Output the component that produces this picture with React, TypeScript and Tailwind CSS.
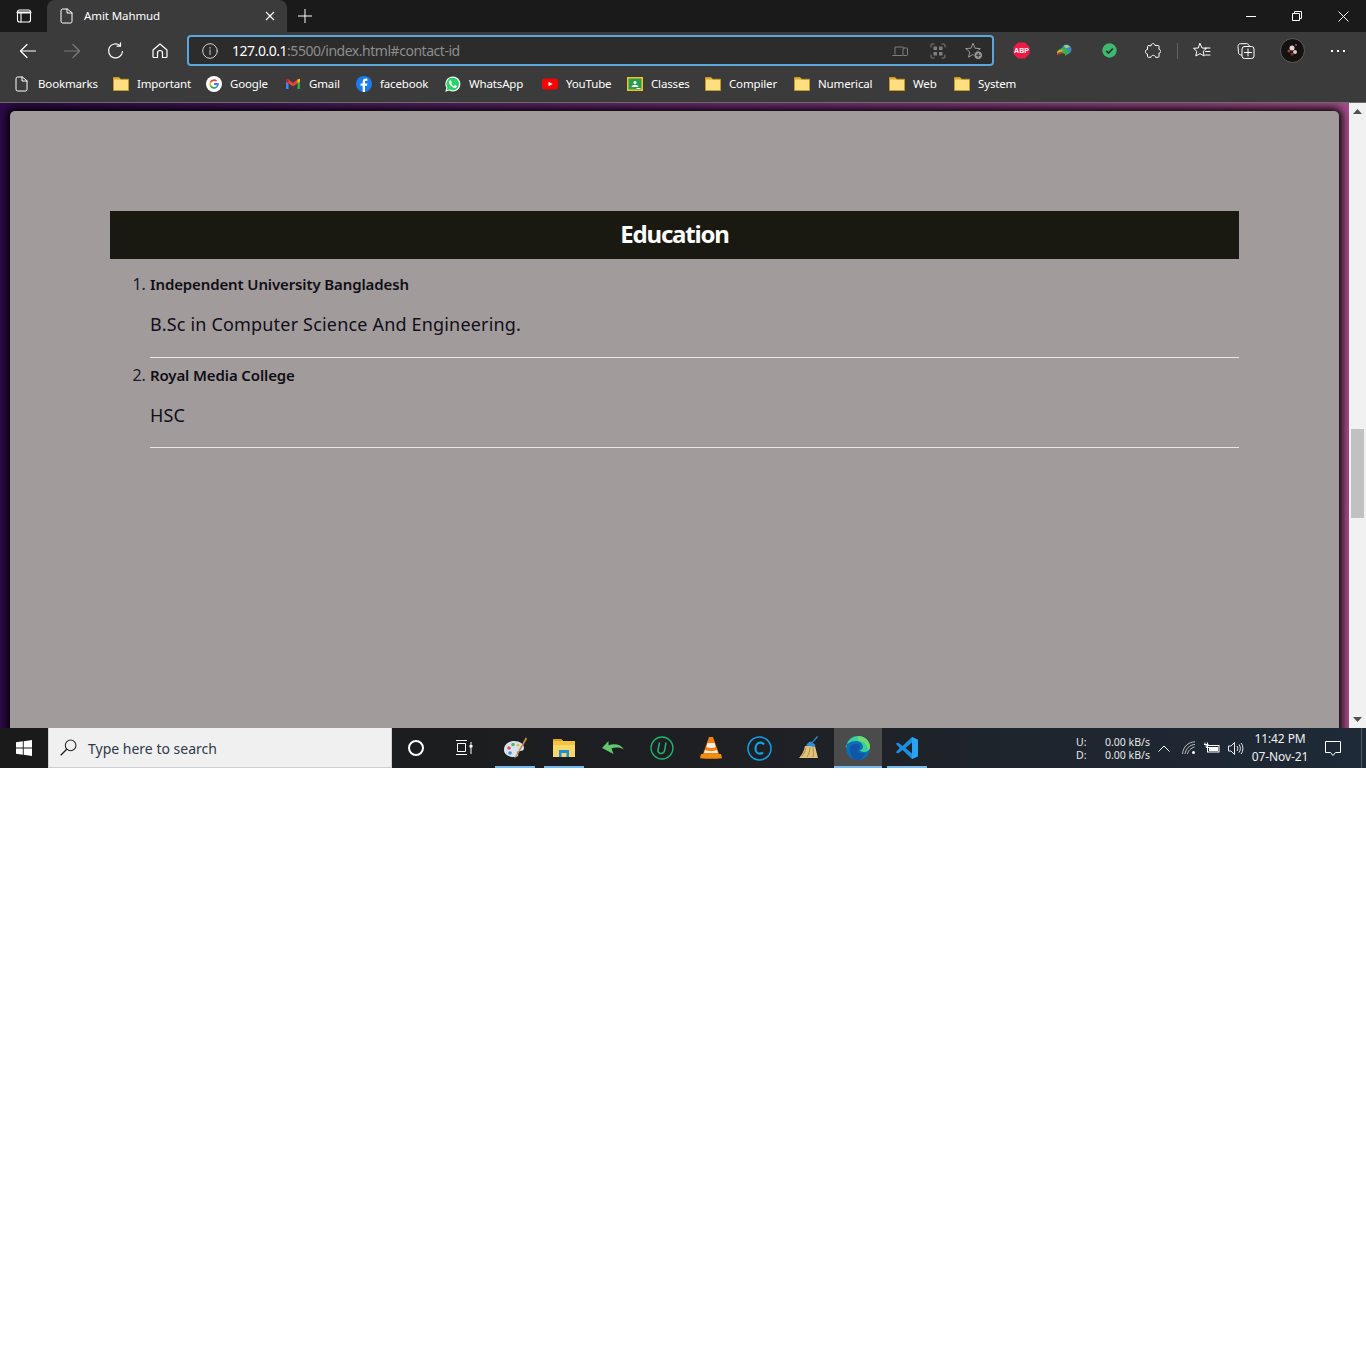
import React from "react";

const ui = "font-['Noto_Sans','Open_Sans',sans-serif]";
const page = "font-['Noto_Sans','Open_Sans',sans-serif]";

function Stroke({ size = 20, sw = 1.2, color = "currentColor", children, vb = 20 }: { size?: number; sw?: number; color?: string; children: React.ReactNode; vb?: number }) {
  return (
    <svg width={size} height={size} viewBox={`0 0 ${vb} ${vb}`} fill="none" stroke={color} strokeWidth={sw} strokeLinecap="round" strokeLinejoin="round">
      {children}
    </svg>
  );
}

const Doc = ({ size = 16 }: { size?: number }) => (
  <Stroke size={size} vb={16} sw={1}>
    <path d="M2 2.500a1.500 1.500 0 0 1 1.500-1.500h4.800L13 4.700v8.800a1.500 1.500 0 0 1-1.500 1.500h-8A1.500 1.500 0 0 1 2 13.500z" />
    <path d="M8 1v4h5" />
  </Stroke>
);

const Folder = () => (
  <svg width="16" height="16" viewBox="0 0 16 16">
    <path d="M.5 1.500h5.500l1.500 1.800h8v11.200H.5z" fill="#ffdf80" stroke="#c39a2a" />
    <path d="M1 1.800h5l1.300 1.700H1z" fill="#d9a92d" />
  </svg>
);

const Google = () => (
  <svg width="16" height="16" viewBox="0 0 16 16">
    <circle cx="8" cy="8" r="8" fill="#fff" />
    <path d="M8 3.200a4.800 4.800 0 0 1 3.200 1.200L10 5.600A3.100 3.100 0 0 0 5.100 7L3.700 5.900A4.800 4.800 0 0 1 8 3.200z" fill="#ea4335" />
    <path d="M3.700 5.900 5.100 7a3 3 0 0 0 0 2l-1.400 1.100a4.800 4.800 0 0 1 0-4.200z" fill="#fbbc05" />
    <path d="M3.700 10.100 5.100 9A3.100 3.100 0 0 0 10 10.400l1.300 1.100A4.800 4.800 0 0 1 3.700 10.100z" fill="#34a853" />
    <path d="M12.800 7.100H8v1.800h2.800c-.2.600-.5 1.100-.8 1.500l1.300 1.100c1-.9 1.600-2.400 1.500-4.400z" fill="#4285f4" />
  </svg>
);

const Gmail = () => (
  <svg width="16" height="16" viewBox="0 0 16 16">
    <path d="M1 4v9h2.500V7z" fill="#4285f4" />
    <path d="M15 4v9h-2.500V7z" fill="#34a853" />
    <path d="M1 4l1.500-1.200L8 7l5.500-4.200L15 4v1.500L8 10.500 1 5.500z" fill="#ea4335" />
    <path d="M12.500 3.600 15 2.800V5.500l-2.500 1.700z" fill="#fbbc05" />
    <path d="M1 2.800 3.500 3.600v3.600L1 5.500z" fill="#c5221f" />
  </svg>
);

const Facebook = () => (
  <svg width="16" height="16" viewBox="0 0 16 16">
    <circle cx="8" cy="8" r="8" fill="#1b7cf2" />
    <path d="M9 16V9.800h2l.4-2.400H9V6c0-.8.300-1.200 1.200-1.200h1.200V2.700c-.5-.1-1.100-.2-1.700-.2C8 2.500 6.700 3.700 6.700 5.800v1.600H4.600v2.400h2.100V16z" fill="#fff" />
  </svg>
);

const WhatsApp = () => (
  <svg width="16" height="16" viewBox="0 0 16 16">
    <path d="M.3 15.700l1.100-3.900A7.500 7.500 0 1 1 4.300 14.600z" fill="#fff" />
    <path d="M1.700 14.300l.8-2.700A6.300 6.300 0 1 1 4.600 13.500z" fill="#25d366" />
    <path d="M5.600 4.300c-.3 0-.7.100-1 .5-.7.700-.8 1.800-.2 3 .9 1.800 2.500 3.300 4.500 4 1.100.4 2 .1 2.600-.5.300-.3.400-.8.400-1.200l-2-1-.8 1c-1.200-.4-2.300-1.400-2.900-2.600l.7-.9z" fill="#fff" />
  </svg>
);

const YouTube = () => (
  <svg width="16" height="16" viewBox="0 0 16 16">
    <rect x="0" y="2.500" width="16" height="11" rx="3" fill="#f00" />
    <path d="M6.500 5.700 10.700 8l-4.200 2.300z" fill="#fff" />
  </svg>
);

const Classroom = () => (
  <svg width="16" height="16" viewBox="0 0 16 16">
    <rect x="0" y="1" width="16" height="14" fill="#f7c325" />
    <rect x="1.500" y="2.500" width="13" height="11" fill="#2a9c4f" />
    <circle cx="8" cy="6.500" r="1.600" fill="#fff" />
    <path d="M4.500 11c.4-1.600 1.800-2.300 3.500-2.300s3.100.7 3.500 2.300z" fill="#fff" />
    <rect x="9.500" y="12" width="4" height="1" fill="#fff" />
  </svg>
);

const marks: { label: string; icon: React.ReactNode; w: string }[] = [
  { label: "Bookmarks", icon: <Doc />, w: "w-[59px]" },
  { label: "Important", icon: <Folder />, w: "w-[53px]" },
  { label: "Google", icon: <Google />, w: "w-[39px]" },
  { label: "Gmail", icon: <Gmail />, w: "w-[31px]" },
  { label: "facebook", icon: <Facebook />, w: "w-[49px]" },
  { label: "WhatsApp", icon: <WhatsApp />, w: "w-[57px]" },
  { label: "YouTube", icon: <YouTube />, w: "w-[45px]" },
  { label: "Classes", icon: <Classroom />, w: "w-[38px]" },
  { label: "Compiler", icon: <Folder />, w: "w-[49px]" },
  { label: "Numerical", icon: <Folder />, w: "w-[55px]" },
  { label: "Web", icon: <Folder />, w: "w-[25px]" },
  { label: "System", icon: <Folder />, w: "w-[37px]" },
];

function Slot({ children, cls = "w-[44px]" }: { children: React.ReactNode; cls?: string }) {
  return <div className={`${cls} h-full flex items-center justify-center shrink-0`}>{children}</div>;
}

function TitleBar() {
  return (
    <div className="h-[32px] bg-[#1a1a1a] flex text-white shrink-0">
      <div className="w-[47px] flex items-center justify-center">
        <Stroke size={16} vb={16} sw={1.1}>
          <rect x="1.500" y="2" width="13" height="12" rx="2" />
          <path d="M1.500 4.500h13" strokeWidth="2" />
          <path d="M5 5v9" />
        </Stroke>
      </div>
      <div className={`w-[240px] bg-[#3b3b3b] rounded-t-[8px] flex items-center pl-[12px] pr-[12px] ${ui}`}>
        <Doc />
        <span className="ml-[9px] text-[11.5px] tracking-[-0.1px] flex-1 whitespace-nowrap">Amit Mahmud</span>
        <svg width="10" height="10" viewBox="0 0 10 10" stroke="#fff" strokeWidth="1.200"><path d="M1 1l8 8M9 1l-8 8" /></svg>
      </div>
      <div className="w-[36px] flex items-center justify-center">
        <svg width="16" height="16" viewBox="0 0 16 16" stroke="#fff" strokeWidth="1"><path d="M8 1v14M1 8h14" /></svg>
      </div>
      <div className="flex-1" />
      <Slot cls="w-[46px]"><svg width="10" height="10" viewBox="0 0 10 10" stroke="#fff"><path d="M0 5.500h10" /></svg></Slot>
      <Slot cls="w-[46px]"><svg width="10" height="10" viewBox="0 0 10 10" stroke="#fff" fill="none"><path d="M.5 2.500h7v7h-7zM2.500 2.500v-2h7v7h-2" /></svg></Slot>
      <Slot cls="w-[46px]"><svg width="11" height="11" viewBox="0 0 11 11" stroke="#fff"><path d="M.5.500l10 10M10.500.500l-10 10" /></svg></Slot>
    </div>
  );
}

function Toolbar() {
  return (
    <div className="h-[37px] bg-[#3b3b3b] flex items-center pl-[6px] text-white shrink-0">
      <Slot>
        <Stroke size={18} vb={18} sw={1.200}><path d="M1.500 9h15M8 2.500 1.500 9 8 15.500" /></Stroke>
      </Slot>
      <Slot>
        <Stroke size={18} vb={18} sw={1.200} color="#7b7b7b"><path d="M16.500 9h-15M10 2.500 16.500 9 10 15.500" /></Stroke>
      </Slot>
      <Slot>
        <Stroke size={18} vb={18} sw={1.200}><path d="M15.500 9.500A7 7 0 1 1 13 3.500" /><path d="M13.500 .8v3.400H10" /></Stroke>
      </Slot>
      <Slot>
        <Stroke size={18} vb={18} sw={1.200}><path d="M2 8 9 2l7 6v6.500a1 1 0 0 1-1 1h-3.500V11a2.500 2.500 0 0 0-5 0v4.500H3a1 1 0 0 1-1-1z" /></Stroke>
      </Slot>
      <div className={`ml-[5px] w-[807px] h-[31px] rounded-[4px] border-2 border-[#5aa7dc] bg-[#2c2c2c] flex items-center ${ui}`}>
        <div className="w-[43px] pr-[2px] flex justify-center text-[#d0d0d0]">
          <Stroke size={16} vb={16} sw={1}>
            <circle cx="8" cy="8" r="7.300" />
            <path d="M8 7v4.500M8 4.300v1" />
          </Stroke>
        </div>
        <span className="text-[14px] tracking-[-0.47px] text-[#8c8c8c] whitespace-nowrap">
          <span className="text-white">127.0.0.1</span>:5500/index.html#contact-id
        </span>
        <div className="flex-1" />
        <div className="w-[36px] pr-[4px] flex justify-center text-[#7f7f7f]">
          <Stroke size={16} vb={16} sw={1}>
            <path d="M3 11V4h8M.8 12.500h9.500" />
            <rect x="11" y="5" width="4.500" height="7.500" rx=".8" />
          </Stroke>
        </div>
        <div className="w-[36px] pr-[1px] flex justify-center text-[#7f7f7f]">
          <Stroke size={16} vb={16} sw={1}>
            <path d="M1 4V2a1 1 0 0 1 1-1h2M12 1h2a1 1 0 0 1 1 1v2M15 12v2a1 1 0 0 1-1 1h-2M4 15H2a1 1 0 0 1-1-1v-2" />
            <rect x="3.500" y="3.500" width="3.500" height="3.500" fill="#7f7f7f" stroke="none" />
            <rect x="9" y="3.500" width="3.500" height="3.500" fill="#7f7f7f" stroke="none" />
            <rect x="3.500" y="9" width="3.500" height="3.500" fill="#7f7f7f" stroke="none" />
            <rect x="9" y="9" width="3.500" height="3.500" fill="#7f7f7f" stroke="none" />
          </Stroke>
        </div>
        <div className="w-[36px] flex justify-center text-[#9a9a9a]">
          <svg width="18" height="18" viewBox="0 0 18 18" fill="none" stroke="currentColor" strokeLinejoin="round">
            <path d="M8 1.200 10 6.200l5.300.4-4.100 3.400 1.300 5.200L8 12.500l-4.500 2.700L4.800 10 .7 6.600 6 6.200z" />
            <circle cx="13.200" cy="13.200" r="4.300" fill="#9a9a9a" stroke="#2c2c2c" />
            <path d="M13.200 11v4.400M11 13.200h4.400" stroke="#2c2c2c" />
          </svg>
        </div>
      </div>
      <div className="ml-[5px] flex h-full items-center">
        <Slot>
          <svg width="17" height="17" viewBox="0 0 17 17">
            <path d="M5 .5h7L16.500 5v7L12 16.500H5L.5 12V5z" fill="#ed1c47" />
            <text x="8.500" y="11" textAnchor="middle" fontSize="7" fontWeight="700" fill="#fff" fontFamily="Liberation Sans">ABP</text>
          </svg>
        </Slot>
        <Slot>
          <svg width="18" height="18" viewBox="0 0 18 18">
            <circle cx="10.500" cy="7.500" r="5" fill="#3f7fd6" />
            <path d="M8 3.500a5 5 0 0 1 6 1.500l-5 1.500z" fill="#a5d36d" />
            <path d="M1 10c2-3.500 5-4.500 8-3v-2l5 5-5 4v-2.500C6.500 11 4 10.500 1 13z" fill="#3cb14a" />
            <path d="M1 10c2-2 4-2.500 6-2l-1 1.500c-2 0-3.500.5-5 2.500z" fill="#e8b21e" />
            <path d="M1 11.500c2-1.500 4-1.500 6-1L5 12c-1.500 0-3 .5-4 1.500z" fill="#d7362a" />
          </svg>
        </Slot>
        <Slot>
          <svg width="15" height="15" viewBox="0 0 15 15">
            <circle cx="7.500" cy="7.500" r="7.200" fill="#3dba6f" />
            <path d="M4.300 7.800l2.300 2.200 4.200-4.500" fill="none" stroke="#26332b" strokeWidth="1.700" />
          </svg>
        </Slot>
        <Slot>
          <Stroke size={16} vb={16} sw={1}>
            <path d="M6 2.500C6 1.200 7 .6 8 .6s2 .6 2 1.900H13a1 1 0 0 1 1 1v3c1.300 0 1.800 1 1.800 1.800S15.300 10 14 10v3.300a1 1 0 0 1-1 1h-2.500c0-1.200-1-2-2.200-2s-2.300.8-2.300 2H3.500a1 1 0 0 1-1-1V11C1.200 11 .4 10 .4 8.800S1.200 6.500 2.500 6.500v-3a1 1 0 0 1 1-1z" />
          </Stroke>
        </Slot>
        <div className="w-[5px] flex justify-center"><div className="w-px h-[16px] bg-[#5f5f5f]" /></div>
        <Slot>
          <Stroke size={18} vb={18} sw={1}>
            <path d="M7 1.500 9 6l4.500.3-3.300 3 1 4.700L7 11.600 2.800 14l1-4.700L.5 6.300 5 6z" />
            <path d="M12 6h5M12.500 9.500h4.500M12.500 13h4.500" />
          </Stroke>
        </Slot>
        <Slot>
          <Stroke size={18} vb={18} sw={1}>
            <path d="M4.500 13C2.500 13 1.500 12 1.500 10.500L1 4.500C1 2.800 2 1.700 3.500 1.700h6C11 1.700 12 2.500 12.300 4" />
            <rect x="5" y="4.500" width="12" height="12" rx="2.500" />
            <path d="M11 7v7M7.500 10.500h7" />
          </Stroke>
        </Slot>
        <Slot cls="w-[46px] pl-[2px]">
          <svg width="25" height="25" viewBox="0 0 25 25">
            <circle cx="12.500" cy="12.500" r="12" fill="#141210" stroke="#5c5c5c" />
            <circle cx="12" cy="10" r="2.500" fill="#e4d5d0" />
            <circle cx="9" cy="13" r="1.500" fill="#a83c3c" />
            <circle cx="15" cy="14" r="2" fill="#d9c7c2" />
            <circle cx="12" cy="16" r="1.500" fill="#8c2f2f" />
            <circle cx="16" cy="7" r="1" fill="#b94c4c" />
          </svg>
        </Slot>
        <Slot cls="w-[46px] pl-[2px]">
          <div className="flex gap-[4px]">
            <div className="w-[2px] h-[2px] bg-white" />
            <div className="w-[2px] h-[2px] bg-white" />
            <div className="w-[2px] h-[2px] bg-white" />
          </div>
        </Slot>
      </div>
    </div>
  );
}

function Bookmarks() {
  return (
    <div className={`h-[34px] bg-[#3b3b3b] border-b border-[#6b6b6b] flex items-center pl-[14px] pb-[3px] gap-[16px] text-[11.5px] text-white shrink-0 ${ui}`}>
      {marks.map((m) => (
        <div key={m.label} className="flex items-center gap-[8px]">
          {m.icon}
          <span className={`${m.w} whitespace-nowrap tracking-[-0.15px]`}>{m.label}</span>
        </div>
      ))}
    </div>
  );
}

function Content() {
  return (
    <div className="flex-1 min-h-0 flex overflow-hidden">
      <div className="flex-1 min-w-0 bg-gradient-to-r from-[#2e0a49] via-[#6a2a70] to-[#a44c87] pt-[8px] pl-[10px] pr-[10px]">
        <div className={`h-[800px] bg-[#a19c9b] rounded-[5px] shadow-[0_0_8px_3px_#000000] pt-[100px] pl-[100px] pr-[100px] ${page}`}>
          <h2 className="h-[48px] bg-[#191911] text-white text-[24px] font-bold leading-[46px] text-center tracking-[-1.2px]">Education</h2>
          <ol className="list-decimal pl-[40px] pt-[13px] text-[16px] text-[#1d1a2a]">
            <li>
              <h3 className="text-[15px] text-[#100e16] font-semibold leading-[24px] tracking-[-0.12px]">Independent University Bangladesh</h3>
              <p className="mt-[15px] text-[18px] leading-[26px] tracking-[0.18px] text-[#120e1a]">B.Sc in Computer Science And Engineering.</p>
              <hr className="mt-[20px] mb-[5px] border-0 h-px bg-[#e8e8e8]" />
            </li>
            <li>
              <h3 className="text-[15px] text-[#100e16] font-semibold leading-[24px] tracking-[-0.12px]">Royal Media College</h3>
              <p className="mt-[15px] text-[18px] leading-[26px] tracking-[0.18px] text-[#120e1a]">HSC</p>
              <hr className="mt-[19px] border-0 h-px bg-[#e8e8e8]" />
            </li>
          </ol>
        </div>
      </div>
      <div className="w-[17px] bg-[#f1f1f1] flex flex-col items-center shrink-0">
        <div className="h-[17px] flex items-center justify-center">
          <svg width="9" height="5" viewBox="0 0 9 5"><path d="M4.500 0 9 5H0z" fill="#505050" /></svg>
        </div>
        <div className="w-[13px] h-[89px] bg-[#c1c1c1] mt-[309px]" />
        <div className="flex-1" />
        <div className="h-[17px] flex items-center justify-center">
          <svg width="9" height="5" viewBox="0 0 9 5"><path d="M4.500 5 9 0H0z" fill="#505050" /></svg>
        </div>
      </div>
    </div>
  );
}

function TaskIcon({ children, bar, cls = "w-[49px]" }: { children: React.ReactNode; bar?: string; cls?: string }) {
  return (
    <div className={`${cls} h-full flex items-center justify-center relative shrink-0`}>
      {children}
      {bar ? <div className={`absolute bottom-0 h-[2px] bg-[#76b9ed] ${bar}`} /> : null}
    </div>
  );
}

function Taskbar() {
  return (
    <div className={`h-[40px] bg-gradient-to-r from-[#1a1a1a] via-[#1e1f22] to-[#1e2a38] flex text-white shrink-0 ${ui}`}>
      <div className="w-[48px] flex items-center justify-center">
        <svg width="16" height="16" viewBox="0 0 16 16" fill="#fff">
          <path d="M0 2.300 6.800 1.300V7.500H0zM7.700 1.200 16 0v7.500H7.700zM0 8.400h6.800v6.300L0 13.700zM7.700 8.400H16V16l-8.300-1.200z" />
        </svg>
      </div>
      <div className="w-[344px] bg-[#f0f0f0] border border-[#cfcfcf] border-t-0 flex items-center pl-[11px] text-[#2d3a4a]">
        <svg width="17" height="17" viewBox="0 0 16 16" fill="none" stroke="#222" strokeWidth="1">
          <circle cx="10" cy="6" r="5" />
          <path d="M6.300 9.700.7 15.300" strokeWidth="1.300" />
        </svg>
        <span className="ml-[11px] pt-[1px] text-[14px] whitespace-nowrap">Type here to search</span>
      </div>
      <div className="w-[48px] flex items-center justify-center">
        <div className="w-[16px] h-[16px] rounded-full border-2 border-white" />
      </div>
      <div className="w-[48px] flex items-center justify-center">
        <svg width="17" height="16" viewBox="0 0 17 16" fill="none" stroke="#fff">
          <path d="M0 .5h11M1.500 3.500h8v8h-8zM0 14.500h11M15 2v3M15 7v7" />
          <rect x="13.500" y="5" width="3" height="2.500" fill="#fff" stroke="none" />
        </svg>
      </div>
      <div className="w-[2px] shrink-0" />
      <TaskIcon bar="left-[5px] w-[40px]">
        <svg width="26" height="26" viewBox="0 0 26 26">
          <path d="M2 15C2 9 7 6 12 6c6 0 10 3 10 7 0 3-3 3-5 3-2 0-2 2-1 3 1 2-1 3-4 3-6 0-10-3-10-7z" fill="#d7e4ee" />
          <circle cx="7" cy="13" r="1.800" fill="#e0524d" />
          <circle cx="11" cy="9.500" r="1.800" fill="#58b16a" />
          <circle cx="16" cy="10" r="1.500" fill="#e8b93e" />
          <circle cx="8" cy="18" r="1.800" fill="#4c8fd6" />
          <path d="M24 2 14 20l-2 4 3-3L25 4z" fill="#c98a4e" />
        </svg>
      </TaskIcon>
      <TaskIcon bar="left-[5px] w-[40px]">
        <svg width="24" height="24" viewBox="0 0 24 24">
          <path d="M1 3h8l2 2h12v15H1z" fill="#f5c344" />
          <path d="M1 3h8l2 2H1z" fill="#d9a22c" />
          <path d="M1 9h22v12H1z" fill="#fad867" />
          <path d="M7 21v-7h10v7h-2.500v-4h-5v4z" fill="#1b8fdc" />
        </svg>
      </TaskIcon>
      <TaskIcon>
        <svg width="24" height="18" viewBox="0 0 24 18">
          <path d="M1 9l6.500-7v4.300C14 4 20 5.500 23 10.500 19 8 14 8 10.500 9.500L12.500 15z" fill="#63c76f" />
        </svg>
      </TaskIcon>
      <TaskIcon>
        <svg width="24" height="24" viewBox="0 0 24 24" fill="none">
          <circle cx="12" cy="12" r="11" stroke="#1fb56c" strokeWidth="1.300" />
          <path d="M9.500 6.500 8 14c-.3 2 1 3.500 3 3.500s3.300-1.300 3.700-3.500L16 6.500" stroke="#1fb56c" strokeWidth="1.500" />
        </svg>
      </TaskIcon>
      <TaskIcon>
        <svg width="22" height="24" viewBox="0 0 22 24">
          <path d="M9 1h4l6 17H3z" fill="#f47f0c" />
          <path d="M7.500 7h7l1.200 4c-2.500 1.200-7 1.200-9.400 0z" fill="#f4f0e8" />
          <path d="M5 14c3 1.500 9 1.500 12 0l1 3H4z" fill="#f4f0e8" />
          <path d="M1 18h20l1 4c0 1-21 1-22 0z" fill="#f28c0f" />
        </svg>
      </TaskIcon>
      <TaskIcon>
        <svg width="25" height="25" viewBox="0 0 25 25" fill="none">
          <circle cx="12.500" cy="12.500" r="11.500" stroke="#12a0ea" strokeWidth="1.500" />
          <path d="M17 8.500c-1-1.300-2.300-1.800-3.500-1.800-3 0-5 2.800-5 6 0 3 2 5 4.500 5 1 0 2-.3 3-1" stroke="#12a0ea" strokeWidth="2.200" />
        </svg>
      </TaskIcon>
      <TaskIcon>
        <svg width="22" height="24" viewBox="0 0 22 24">
          <path d="M7 10h10l3 12H1c3-3 5-7 6-12z" fill="#e1c17c" />
          <path d="M8 11.500c-1 4-2 6-4 9M12 11.500c-.3 4-1.500 7-3 9.500M15 11.500c.5 4 .5 7 0 9.500" stroke="#b18f4b" fill="none" />
          <path d="M8 9.500 17 11c.5-1.500.3-3-1-3.300L14.500 7 20 1l-1-1-5 6-2-.5c-1.500 1-3 2-4 4z" fill="#2d8fd8" />
        </svg>
      </TaskIcon>
      <div className="w-[1px] shrink-0" />
      <TaskIcon bar="left-0 w-[48px]" cls="w-[48px] bg-[#4b4b4b]">
        <svg width="26" height="26" viewBox="0 0 26 26">
          <circle cx="13" cy="13" r="12" fill="#0c6fb5" />
          <path d="M1.500 12C2 5 7 1 13 1c7 0 12 5 12 11 0 3-3 5-6 5-2 0-4-1-4-2 2 0 3-1.500 3-3 0-4-4-6-7-6-5 0-10 3-10.500 6z" fill="#3ccf9b" />
          <path d="M13 1C19 1 25 5.500 25 12c0 1.500-.8 2.800-2 3.700 0-6-5-10-10-10V1z" fill="#6fdb6f" />
          <path d="M5 14c0-3 3-5 6-5 2 0 4 1 4 3.500 0 1-1 2-2.500 2.500 0 2 2 3.500 5 3.500 1 0 2-.2 3-.6C18.500 22 16 25 13 25 8 25 5 20 5 14z" fill="#1155a8" />
        </svg>
      </TaskIcon>
      <div className="w-[5px] shrink-0" />
      <TaskIcon bar="left-0 w-[40px]" cls="w-[40px]">
        <svg width="24" height="24" viewBox="0 0 24 24">
          <path d="M17 1 7.500 10 3 6.500 0.800 7.700l4 4.300-4 4.300L3 17.500 7.500 14l9.500 9 6-2.800V3.800z" fill="#1a8fe0" />
          <path d="M17 6.500 10.500 12l6.500 5.500z" fill="#1f2226" />
          <path d="M17 1l6 2.800v16.400L17 23z" fill="#2aa4f0" />
        </svg>
      </TaskIcon>
      <div className="flex-1" />
      <div className="w-[29px] pt-[1px] text-[10.5px] leading-[12.500px] text-[#e6e6e6]">
        <div className="h-full flex flex-col justify-center"><div>U:</div><div>D:</div></div>
      </div>
      <div className="w-[47px] pt-[1px] text-[10.5px] leading-[12.500px] text-[#e6e6e6] whitespace-nowrap">
        <div className="h-full flex flex-col justify-center"><div>0.00 kB/s</div><div>0.00 kB/s</div></div>
      </div>
      <div className="w-[25px] pr-[2px] flex items-center justify-center">
        <svg width="12" height="7" viewBox="0 0 12 7" fill="none" stroke="#fff"><path d="M.5 6.500 6 1l5.500 5.500" /></svg>
      </div>
      <div className="w-[23px] flex items-center justify-center">
        <svg width="14" height="14" viewBox="0 0 14 14" fill="none" stroke="#cfcfcf" strokeWidth=".9">
          <path d="M.5 13C1 6 6 1 13 .8M3 13C3.500 8 8 3.500 13 3.500M5.500 13c.3-3 3.500-6 7-7" />
          <circle cx="11.500" cy="11.500" r="1.500" fill="#fff" stroke="none" />
        </svg>
      </div>
      <div className="w-[24px] flex items-center justify-center">
        <svg width="16" height="12" viewBox="0 0 16 12" fill="#fff" stroke="#fff">
          <rect x="3.500" y="3.500" width="11.500" height="6.500" fill="none" />
          <rect x="5" y="5" width="9" height="4" stroke="none" />
          <path d="M1 .5v2M3.500 .5v2M0 2.500h4.500M2.200 2.500v3h3" fill="none" />
        </svg>
      </div>
      <div className="w-[24px] flex items-center justify-center">
        <svg width="16" height="15" viewBox="0 0 16 15" fill="none" stroke="#fff" strokeWidth=".9">
          <path d="M.5 5h2.500L6.500 1.500v12L3 10H.5z" />
          <path d="M9 5c1 1.500 1 3.500 0 5M11 3.500c1.800 2.300 1.800 5.700 0 8M13 2c2.500 3 2.500 8 0 11" />
        </svg>
      </div>
      <div className="w-[57px] pl-[7px] flex flex-col items-center justify-center text-[12px] leading-[18px] text-[#f0f0f0] tracking-[-0.1px] whitespace-nowrap">
        <div>11:42 PM</div>
        <div>07-Nov-21</div>
      </div>
      <div className="w-[56px] flex items-center justify-center">
        <svg width="16" height="15" viewBox="0 0 16 15" fill="none" stroke="#fff">
          <path d="M.5.500h15v11h-5L8 14.500 5.500 11.500h-5z" />
        </svg>
      </div>
      <div className="w-[5px] border-l border-[#54585e]" />
    </div>
  );
}

export default function App() {
  return (
    <div className="w-[1366px] h-[1366px] bg-white overflow-hidden">
      <div className="h-[768px] flex flex-col">
        <TitleBar />
        <Toolbar />
        <Bookmarks />
        <Content />
        <Taskbar />
      </div>
    </div>
  );
}
